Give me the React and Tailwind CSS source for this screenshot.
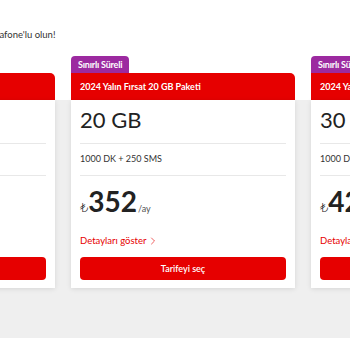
import { ChevronRight } from "lucide-react";

const plans = [
  { id: 1, gb: "10 GB", minutes: "1000 DK + 250 SMS", price: "299", badge: false },
  { id: 2, gb: "20 GB", minutes: "1000 DK + 250 SMS", price: "352", badge: true },
  { id: 3, gb: "30 GB", minutes: "1000 DK + 250 SMS", price: "429", badge: true },
];

function PlanCard({ plan }) {
  return (
    <div className="w-[224px] shrink-0 flex flex-col">
      <div className="h-[17px] flex">
        {plan.badge && (
          <div className="h-[17px] px-[7px] rounded-t-[4px] bg-[#9c2aa0] text-white text-[9px] font-bold flex items-center tracking-[-0.2px]">
            Sınırlı Süreli
          </div>
        )}
      </div>
      <div
        className={`h-[27px] bg-[#e60000] px-[9px] flex items-center text-white text-[9px] font-bold whitespace-nowrap ${
          plan.badge ? "rounded-tr-[5px]" : "rounded-t-[5px]"
        }`}
      >
        2024 Yalın Fırsat {plan.gb} Paketi
      </div>
      <div className="bg-white px-[9px] pb-[8px] shadow-[0_1px_5px_rgba(0,0,0,0.1)]">
        <div className="pt-[7px] pb-[10px] text-[22px] leading-[26px] text-[#222] border-b border-[#e8e8e8]">
          {plan.gb}
        </div>
        <div className="pt-[9px] pb-[10px] text-[9px] leading-[12px] text-[#333] border-b border-[#e8e8e8]">
          {plan.minutes}
        </div>
        <div className="mt-[9px] flex items-baseline text-[#222] leading-[32px]">
          <span className="text-[13px] font-['DejaVu_Sans',sans-serif] font-light">₺</span>
          <span className="text-[28px] font-bold">{plan.price}</span>
          <span className="text-[9px] text-[#555] ml-[1px]">/ay</span>
        </div>
        <div className="mt-[10px] flex items-center gap-[1px] text-[9.5px] leading-[12px] text-[#e60000]">
          Detayları göster
          <ChevronRight size={12} strokeWidth={1.25} />
        </div>
        <button className="mt-[10px] w-full h-[23px] rounded-[4px] bg-[#e60000] text-white text-[9px] font-semibold">
          Tarifeyi seç
        </button>
      </div>
    </div>
  );
}

export default function App() {
  return (
    <div className="w-[350px] h-[350px] overflow-hidden bg-white font-['Lato',sans-serif]">
      <div className="h-[56px] pt-[29px]">
        <p className="-ml-[17px] text-[9.5px] leading-[12px] text-[#333] whitespace-nowrap">
          Vodafone'lu olun!
        </p>
      </div>
      <div className="h-[282px] bg-[linear-gradient(to_bottom,#fff_44px,#efefef_44px)]">
        <div className="flex gap-[16px] -ml-[169px]">
          {plans.map((plan) => (
            <PlanCard key={plan.id} plan={plan} />
          ))}
        </div>
      </div>
    </div>
  );
}
